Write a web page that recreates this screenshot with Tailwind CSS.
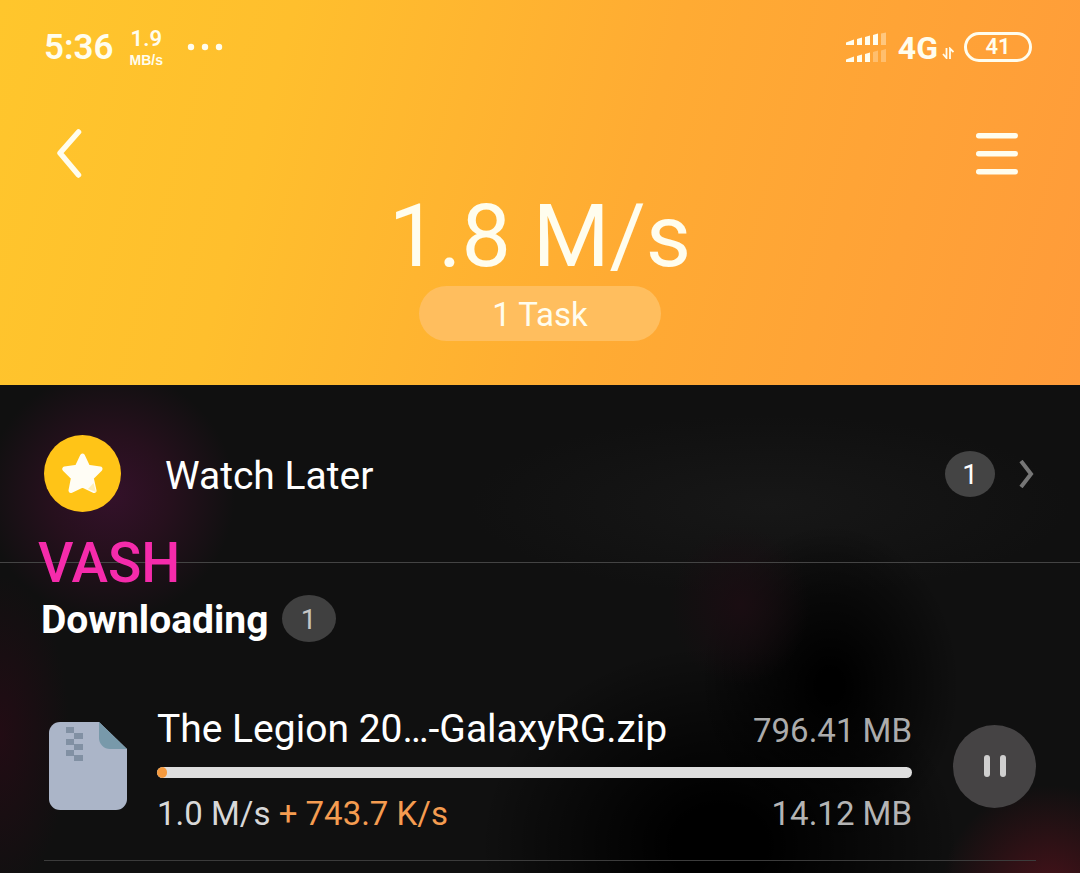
<!DOCTYPE html>
<html lang="en">
<head>
<meta charset="utf-8">
<meta name="viewport" content="width=device-width, initial-scale=1">
<title>Downloads</title>
<script src="https://cdn.jsdelivr.net/npm/@tailwindcss/browser@4"></script>
</head>
<body class="min-h-screen bg-[#101010] font-[Roboto,sans-serif] text-white">
<div class="flex min-h-screen flex-col">
  <header class="bg-linear-[105deg,#ffc62c_0%,#ffbf2d_25%,#ffab33_58%,#ff9b3a_100%] pb-11 text-[#fffdee]">
    <!-- Status bar -->
    <div class="flex h-[94px] items-center justify-between pr-12 pl-11">
      <div class="flex items-center">
        <span class="pt-[2px] text-[35px] leading-10 font-semibold">5:36</span>
        <div class="ml-4 flex flex-col items-center">
          <span class="text-[22px] leading-[26px] font-semibold">1.9</span>
          <span class="font-['Liberation_Sans',sans-serif] text-[14px] leading-4 font-bold">MB/s</span>
        </div>
        <svg class="ml-6 h-2 w-9" viewBox="0 0 36 8" fill="currentColor" aria-hidden="true"><circle cx="4" cy="4" r="3.2"/><circle cx="18" cy="4" r="3.2"/><circle cx="32" cy="4" r="3.2"/></svg>
      </div>
      <div class="flex items-center">
        <svg class="h-8 w-10" viewBox="0 0 40 32" fill="currentColor" aria-hidden="true">
          <path d="M0 14v-2.500l8-3V14H0zM11 8l5-1.500V14h-5zM19 6l5-1.500V14h-5zM27 4l5-1.500V14h-5z"/>
          <path d="M35 2.500l5-1V14h-5z" opacity=".4"/>
          <path d="M0 31v-2.500l8-3V31H0zM11 25l5-1.500V31h-5zM19 23l5-1.500V31h-5z"/>
          <path d="M27 21l5-1.500V31h-5zM35 19.500l5-1.500V31h-5z" opacity=".3"/>
        </svg>
        <span class="ml-3 pt-[2px] text-[32px] leading-10 font-bold">4G</span>
        <svg class="mt-3 ml-1 h-3 w-3" viewBox="0 0 12 12" fill="none" stroke="currentColor" stroke-width="1.800" aria-hidden="true"><path d="M4.500 1v10L1 7M8 12V1.500l3.500 3.500"/></svg>
        <div class="ml-[10px] flex h-[30px] w-[68px] items-center justify-center rounded-full border-[3px] text-[22px] leading-6 font-semibold">41</div>
      </div>
    </div>
    <nav class="flex h-[92px] items-start justify-between pt-[34px] pr-[62px] pl-14">
      <button type="button" aria-label="Back">
        <svg class="h-[50px] w-7" viewBox="0 0 28 50" fill="none" stroke="currentColor" stroke-width="5.500" stroke-linecap="round" stroke-linejoin="round"><path d="M22.500 4L4 25l18.500 22"/></svg>
      </button>
      <button type="button" aria-label="Menu">
        <svg class="h-[50px] w-[42px]" viewBox="0 0 42 50" fill="currentColor"><rect y="5" width="42" height="5.500" rx="2.700"/><rect y="23" width="42" height="5.500" rx="2.700"/><rect y="41" width="42" height="5.500" rx="2.700"/></svg>
      </button>
    </nav>
    <div class="flex flex-col items-center">
      <h1 class="text-[88px] leading-[100px]">1.8 M/s</h1>
      <div class="flex h-[55px] w-[242px] items-center justify-center rounded-full bg-[#ffbe5e] pt-[2px] text-[33px] leading-10">1 Task</div>
    </div>
  </header>

  <main class="flex-1 bg-[radial-gradient(circle_at_110px_110px,#34112a_0px,#26101d_60px,transparent_125px),radial-gradient(circle_at_1050px_510px,#48121a_0px,transparent_110px),radial-gradient(ellipse_70px_160px_at_0px_350px,#220c14_0px,transparent_100%),radial-gradient(ellipse_70px_80px_at_740px_220px,#1a0d12_0px,transparent_100%),radial-gradient(ellipse_130px_160px_at_830px_300px,#000000_10%,transparent_100%),radial-gradient(ellipse_240px_200px_at_720px_460px,#000000_20%,transparent_100%),radial-gradient(ellipse_300px_90px_at_770px_120px,#171717_0px,transparent_100%)]">
    <section class="relative border-b border-[#444444]">
      <a href="#watch-later" class="flex h-[177px] items-center pr-[46px] pl-11">
        <svg class="h-[77px] w-[77px]" viewBox="0 0 77 77" aria-hidden="true">
          <circle cx="38.500" cy="38.500" r="38.500" fill="#ffc417"/>
          <path d="M38.500 21l5.300 11.200 12.200 1.800-8.800 8.700 2.800 12.800-11.500-5.500L27 55.500l2.500-12.800L20.700 34l12.500-1.800z" fill="#fffdf5" stroke="#fffdf5" stroke-width="5" stroke-linejoin="round"/>
          <path d="M44 54l8 3-2.500-9z" fill="#ffeeb8"/>
        </svg>
        <span class="ml-11 pt-1 text-[39px] leading-12">Watch Later</span>
        <span class="ml-auto flex h-[46px] w-[50px] items-center justify-center rounded-[50%] bg-[#444444] pt-[2px] text-[28px]">1</span>
        <svg class="ml-6 h-7 w-[15px]" viewBox="0 0 15 28" fill="none" stroke="#767676" stroke-width="4" aria-hidden="true"><path d="M2 1l10 13L2 27"/></svg>
      </a>
      <!-- User tag laid over the divider -->
      <span class="absolute bottom-0 left-[38px] translate-y-1/2 pt-[2px] text-[55px] leading-16 font-medium text-[#f52bab]">VASH</span>
    </section>

    <section class="px-11 pt-8">
      <div class="-ml-[3px] flex items-center">
        <h2 class="pt-1 text-[39px] leading-[43px] font-bold">Downloading</h2>
        <span class="ml-[13px] flex h-[47px] w-[54px] items-center justify-center rounded-[50%] bg-[#404040] pt-[2px] text-[28px] text-[#c6c6c6]">1</span>
      </div>

      <article class="mt-14 flex items-center border-b border-[#3c3c3c] pb-[26px] pl-[5px]">
        <svg class="h-[88px] w-[78px] shrink-0" viewBox="0 0 78 88" aria-hidden="true">
          <path d="M11 0h39l28 27v50a11 11 0 0 1-11 11H11A11 11 0 0 1 0 77V11A11 11 0 0 1 11 0z" fill="#abb5c8"/>
          <path d="M50 0l28 27H61a11 11 0 0 1-11-11z" fill="#7899aa"/>
          <path d="M17 5h8v6h-8zM25 11h9v6h-9zM17 17h8v6h-8zM25 22h9v6h-9zM17 28h8v6h-8zM25 33h9v6h-9z" fill="#8190a3"/>
        </svg>
        <div class="ml-[30px] min-w-0 flex-1">
          <div class="flex items-center justify-between whitespace-nowrap">
            <h3 class="text-[39px] leading-[62px]">The Legion 20…-GalaxyRG.zip</h3>
            <span class="pt-1 text-[33px] leading-[58px] text-[#acacac]">796.41 MB</span>
          </div>
          <div class="mt-[7px] h-[11px] overflow-hidden rounded-full bg-[#dedede]" role="progressbar" aria-label="Download progress" aria-valuenow="1" aria-valuemin="0" aria-valuemax="100">
            <div class="h-full rounded-full bg-[#f59a3e]" style="width:1.3%"></div>
          </div>
          <div class="mt-4 flex justify-between text-[33px] leading-10 whitespace-nowrap">
            <span class="text-[#d8d8d8]">1.0 M/s <span class="text-[#f59c50]">+ 743.7 K/s</span></span>
            <span class="text-[#b4b4b4]">14.12 MB</span>
          </div>
        </div>
        <button type="button" aria-label="Pause" class="ml-[41px] flex h-[83px] w-[83px] shrink-0 items-center justify-center rounded-full bg-[#454344]">
          <svg class="h-[22px] w-6" viewBox="0 0 24 22" fill="#cfcfcf"><rect x="1" width="6" height="22" rx="3"/><rect x="17" width="6" height="22" rx="3"/></svg>
        </button>
      </article>
    </section>
  </main>
</div>
</body>
</html>
